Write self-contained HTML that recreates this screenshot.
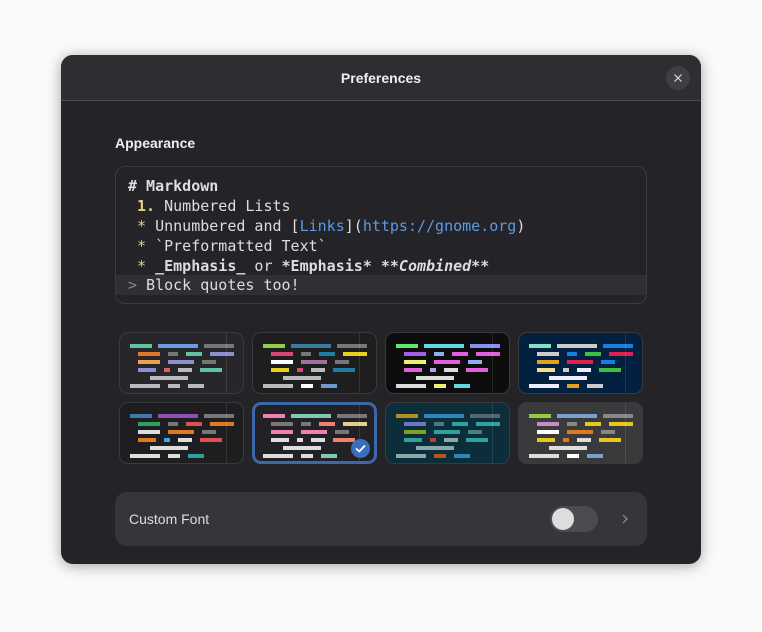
<!DOCTYPE html>
<html><head><meta charset="utf-8"><style>
*{box-sizing:border-box;margin:0;padding:0}
body{width:762px;height:632px;background:#fafafa;position:relative;font-family:"Liberation Sans",sans-serif;overflow:hidden}
.win{position:absolute;left:61px;top:55px;width:640px;height:509px;background:#242428;border-radius:12px;box-shadow:0 2px 14px rgba(0,0,0,.35);overflow:hidden}
.hdr{position:absolute;left:0;top:0;width:640px;height:46px;background:#2e2e32;border-bottom:1px solid #4a4a4e}
.title{position:absolute;width:100%;top:15px;text-align:center;color:#eee;font-weight:bold;font-size:14px}
.close{position:absolute;left:605px;top:11px;width:24px;height:24px;border-radius:50%;background:#3e3e43}
.lbl{position:absolute;left:54px;top:80px;color:#eee;font-weight:bold;font-size:14px}
.code{position:absolute;left:54px;top:111px;width:532px;height:138px;border:1px solid #3c3c40;border-radius:10px;background:#242428;overflow:hidden;font-family:"DejaVu Sans Mono","Liberation Mono",monospace;font-size:15px;color:#ddd}
.ln{position:absolute;left:12px;height:20px;line-height:20px;white-space:pre}
.q{position:absolute;left:0;top:108px;width:100%;height:20px;background:#2f2f34}
.y{color:#e5d080}.bl{color:#5a9ae0}.g{color:#888}
.th{position:absolute;width:125px;height:62px;border-radius:9px;border:1px solid #3a3a3e;overflow:hidden}
.th i{position:absolute;height:4px;display:block}
.th .d{position:absolute;left:106px;top:0;width:1px;height:100%;background:rgba(255,255,255,.1)}
.row{position:absolute;left:54px;top:437px;width:532px;height:54px;background:#36363a;border-radius:12px}
</style></head><body>
<div class="win">
<div class="hdr"><div class="title">Preferences</div>
<div class="close"><svg width="24" height="24"><path d="M8.5 8.5L15.5 15.5M15.5 8.5L8.5 15.5" stroke="#ddd" stroke-width="1.2"/></svg></div></div>
<div class="lbl">Appearance</div>
<div class="code">
<div class="q"></div>
<div class="ln" style="top:9px;font-weight:bold"># Markdown</div>
<div class="ln" style="top:29px"> <span class="y" style="font-weight:bold">1.</span> Numbered Lists</div>
<div class="ln" style="top:49px"> <span class="y">*</span> Unnumbered and [<span class="bl">Links</span>](<span class="bl">https://gnome.org</span>)</div>
<div class="ln" style="top:69px"> <span class="y">*</span> `Preformatted Text`</div>
<div class="ln" style="top:89px"> <span class="y">*</span> <b>_Emphasis_</b> or <b>*Emphasis*</b> <b><i>**Combined**</i></b></div>
<div class="ln" style="top:108px"><span class="g">&gt;</span> Block quotes too!</div>
</div>
<div class="row"><div style="position:absolute;left:14px;top:19px;color:#ddd;font-size:14px">Custom Font</div>
<div style="position:absolute;left:435px;top:14px;width:48px;height:26px;border-radius:13px;background:#4c4c50"><div style="position:absolute;left:2px;top:2px;width:22px;height:22px;border-radius:50%;background:#ddd"></div></div>
<svg style="position:absolute;left:504px;top:20px" width="12" height="14"><path d="M4 3L8 7L4 11" stroke="#888" stroke-width="1.3" fill="none"/></svg></div>
</div>
<div id="thumbs"></div>
<script>
var pos=[[10,11,22],[38,11,40],[84,11,30],[18,19,22],[48,19,10],[66,19,16],[90,19,24],[18,27,22],[48,27,26],[82,27,14],[18,35,18],[44,35,6],[58,35,14],[80,35,22],[30,43,38],[10,51,30],[48,51,12],[68,51,16]];
var T=[
[119,332,'#27272b',['#5fc5a0','#6b9bdf','#777','#e0772a','#777','#5fc5a0','#8d8fd1','#f0a050','#8d8fd1','#777','#8d8fd1','#e06060','#bbb','#5fc5a0','#bbb','#bbb','#bbb','#bbb']],
[252,332,'#1e1e1e',['#8fd14f','#3a7ca0','#777','#d9467a','#777','#1f7ca8','#e8d020','#fff','#a070a0','#777','#e8d020','#d9467a','#bbb','#1f7ca8','#bbb','#bbb','#fff','#6b9bd0']],
[385,332,'#0d0d0d',['#5fe870','#60d8e8','#8890f0','#a060e0','#8ab0f0','#e060e0','#e060e0','#f0f070','#e060e0','#8ab0f0','#e060e0','#b0a0f0','#ddd','#e060e0','#ddd','#ddd','#f0f070','#60d8e8']],
[518,332,'#02203f',['#80e0c0','#ccc','#1a80e0','#ccc','#1a80e0','#40c040','#e02050','#e8a020','#e02050','#1a80e0','#f0e090','#ccc','#eef','#40c040','#eef','#eef','#e8a020','#ccc']],
[119,402,'#1e1e20',['#3a7cb0','#9050b0','#777','#30a060','#777','#e05050','#e07820','#ddd','#e07820','#777','#e07820','#40a8e0','#ddd','#e05050','#ddd','#ddd','#ddd','#30a0a0']],
[252,402,'#222226',['#f080b0','#80c8b0','#777','#777','#777','#f08070','#e0d090','#f080b0','#f080b0','#777','#ddd','#ddd','#ddd','#f08070','#ddd','#ddd','#ddd','#80c8b0']],
[385,402,'#0c2e3a',['#b09020','#2a88c0','#556670','#6a78c0','#4a7a80','#30a0a0','#30a0a0','#80a020','#30a0a0','#4a8080','#30a0a0','#c04030','#8aa','#30a0a0','#8aa','#8aa','#c05020','#2a88c0']],
[518,402,'#3a3a3c',['#90d040','#7aa0d0','#888','#c090c0','#888','#e8c820','#e8c820','#fff','#e07820','#888','#e8c820','#e07820','#ddd','#e8c820','#ddd','#ddd','#fff','#7aa0d0']]];
var h='';
T.forEach(function(t,k){
 var sel=k==5;
 h+='<div class="th" style="left:'+t[0]+'px;top:'+t[1]+'px;background:'+t[2]+(sel?';border:3px solid #3a68a8;':'')+'">';
 pos.forEach(function(p,i){h+='<i style="left:'+(p[0]-(sel?2:0))+'px;top:'+(p[1]-(sel?2:0))+'px;width:'+p[2]+'px;background:'+t[3][i]+'"></i>';});
 h+='<div class="d"'+(sel?' style="left:104px"':'')+'></div></div>';
});
h+='<div style="position:absolute;left:351px;top:439px;width:19px;height:19px;border-radius:50%;background:#3a6fc0"><svg width="19" height="19"><path d="M5 9.5L8.3 12.5L14 6.5" stroke="#fff" stroke-width="1.8" fill="none"/></svg></div>';
document.getElementById('thumbs').innerHTML=h;
</script>
</body></html>
